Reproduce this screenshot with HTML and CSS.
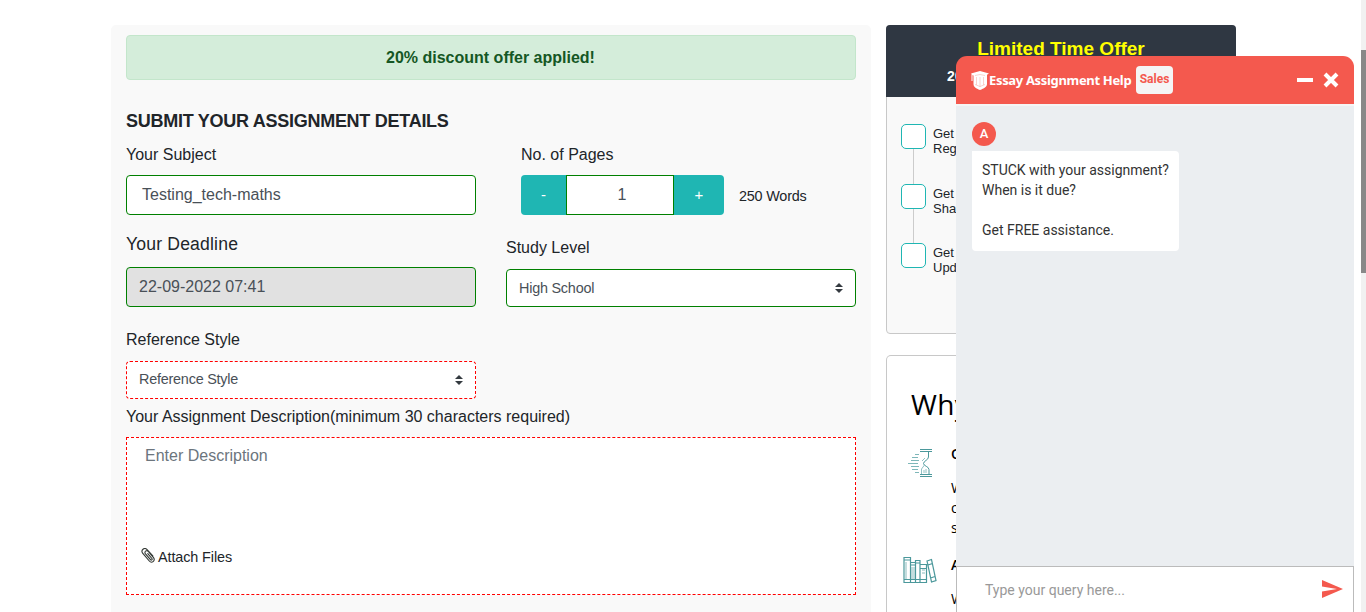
FILE: index.html
```html
<!DOCTYPE html>
<html lang="en">
<head>
<meta charset="utf-8">
<title>Essay Assignment Help</title>
<link rel="stylesheet" href="styles.css">
</head>
<body>
<main class="page">
  <section class="order">
    <div class="alert">20% discount offer applied!</div>
    <h1 class="title">SUBMIT YOUR ASSIGNMENT DETAILS</h1>
    <div class="row">
      <div class="col">
        <div class="label">Your Subject</div>
        <div class="field subject">Testing_tech-maths</div>
      </div>
      <div class="col pages">
        <div class="label">No. of Pages</div>
        <div class="counter">
          <span class="step minus">-</span><span class="count">1</span><span class="step plus">+</span>
          <span class="words">250 Words</span>
        </div>
      </div>
    </div>
    <div class="row second">
      <div class="col">
        <div class="label large">Your Deadline</div>
        <div class="field deadline">22-09-2022 07:41</div>
      </div>
      <div class="col level">
        <div class="label">Study Level</div>
        <div class="select">High School<svg class="caret" viewBox="0 0 8 10"><path d="M4 0 8 4H0zM4 10 0 6H8z" fill="#343a40"/></svg></div>
      </div>
    </div>
    <div class="label ref">Reference Style</div>
    <div class="select missing">Reference Style<svg class="caret" viewBox="0 0 8 10"><path d="M4 0 8 4H0zM4 10 0 6H8z" fill="#343a40"/></svg></div>
    <div class="label desc">Your Assignment Description(minimum 30 characters required)</div>
    <div class="area">
      <div class="hint">Enter Description</div>
      <div class="attach"><svg class="clip" viewBox="0 0 14 16"><path d="M11.800 8 6.300 1.800C5 .4 3.200.3 2 1.200S.5 3.800 1.600 5.100l6.700 7.900c1 1.200 2.600 1.500 3.800.6 1.300-1 1.500-2.700.4-4L7.300 3.500c-.8-.9-1.900-1-2.700-.4s-.9 1.700-.1 2.700l5 5.900c.4.500 1 .5 1.400.2s.4-.9 0-1.400L6.800 5.700" fill="none" stroke="#343a36" stroke-width="1.150" stroke-linecap="round"/></svg>Attach Files</div>
    </div>
  </section>
  <aside class="side">
    <div class="offer">
      <div class="offer-head"><div class="offer-title">Limited Time Offer</div><div class="offer-sub">20</div></div>
      <div class="steps">
        <div class="item"><span class="box"></span><span class="item-text">Get<br>Reg</span></div>
        <div class="item"><span class="box"></span><span class="item-text">Get<br>Sha</span></div>
        <div class="item"><span class="box"></span><span class="item-text">Get<br>Upd</span></div>
      </div>
    </div>
    <div class="why">
      <h2 class="why-title">Why</h2>
      <div class="reason">
        <svg class="glass" viewBox="0 0 26 30" fill="none" stroke="#4b989b"><path d="M12 1.500h12M12 3.500h12M12 26.500h12M12 28.500h12" stroke-width="1"/><path d="M20.500 4v5c0 3-5 4-5 6.500s5.500 3 5.500 6V26" stroke-width="1"/><path d="M13.500 26v-5l3-4" stroke="#91c2c4"/><path d="M7 6.500h4M4 9.500h6M3 12.500h8M0 15.500h10M3 18.500h8M4 21.500h6M7 24.500h4" stroke="#7eb7b9"/><path d="M16 25v-3M18 25v-4M14 13l3-3" stroke="#91c2c4"/></svg>
        <div class="reason-copy"><div class="reason-head">O</div><div>W</div><div>o</div><div>s</div></div>
      </div>
      <div class="reason second-reason">
        <svg class="books" viewBox="0 0 34 28" fill="none" stroke="#4b989b"><path d="M1 1.500h6.500v25H1zM1 4h6.500M7.500 6.500h5v20h-5zM7.500 9h5M12.500 4.500h4.500v22h-4.500zM12.500 7H17M17 8.500h6.500v18H17zM17 12.500h6.500M17 23.500h6.500M1 23.500h22M24 5l4.500-1.500 4.500 21-4.500 1.500zM25 9l4.500-1.500M27.500 22l4.500-1.500" stroke-width="1.200"/><path d="M9 11v12M11 11v12M3 6v17M19 14h3M19 17h3" stroke="#8bbcbe"/></svg>
        <div class="reason-copy"><div class="reason-head">A</div><div>W</div></div>
      </div>
    </div>
  </aside>
</main>
<div class="scroll"><div class="thumb"></div></div>
<section class="chat">
  <header class="chat-head">
    <svg class="crest" viewBox="0 0 18 19"><path d="M0 2.500 9 0l9 2.500-2 1.300v9.200c0 3-3 4.500-7 6-4-1.500-6.500-3-6.500-6V4.500L1.500 4v6h-1V3z" fill="#fff"/><path d="M4 4.500 9 3.500l5 1M5.500 6v8M9 6v10M12.500 6v8M4 13.500l5 2 5-2" fill="none" stroke="#f8b5ae" stroke-width=".6"/></svg>
    <span class="brand">Essay Assignment Help</span>
    <span class="sales">Sales</span>
    <span class="min"></span>
    <svg class="close" viewBox="0 0 16 16"><path d="M2 2 14 14M14 2 2 14" stroke="#fff" stroke-width="4"/></svg>
  </header>
  <div class="chat-body">
    <div class="avatar">A</div>
    <div class="bubble">STUCK with your assignment?<br>When is it due?<br><br>Get FREE assistance.</div>
  </div>
  <div class="chat-input"><span>Type your query here...</span><svg class="send" viewBox="0 0 21 18"><path d="M0 0 21 9 0 18V11.500L15 9 0 6.500z" fill="#f4594e"/></svg></div>
</section>
</body>
</html>
```
FILE: styles.css
```css
* { box-sizing: border-box; }
body { margin: 0; height: 612px; overflow: hidden; background: #fff; color: #212529; font: 16px/24px "Liberation Sans", Arial, sans-serif; }
.page { display: flex; gap: 15px; height: 612px; padding: 25px 0 0 111px; overflow: hidden; }
.order { width: 760px; height: 587px; flex: none; padding: 10px 15px 0; background: #f9f9f9; border-radius: 5px 5px 0 0; }
.alert { height: 45px; line-height: 43px; padding-right: 1px; border: 1px solid #c3e6cb; border-radius: 4px; background: #d4edda; color: #155724; text-align: center; font-weight: 700; }
.title { margin: 29px 0 0; font-size: 18px; line-height: 24px; font-weight: 700; letter-spacing: -.27px; white-space: nowrap; }
.row { display: flex; margin-top: 10px; }
.col { width: 350px; flex: none; }
.pages { width: 335px; margin-left: 45px; }
.level { margin-left: 30px; padding-top: 4px; }
.label { height: 24px; line-height: 24px; white-space: nowrap; }
.large { font-size: 17.6px; letter-spacing: .17px; }
.field { height: 40px; margin-top: 8px; padding-left: 15px; line-height: 37px; border: 1px solid green; border-radius: 4px; background: #fff; color: #495057; }
.row.second { margin-top: 17px; }
.second .field { margin-top: 11px; padding-left: 12px; background: #e1e1e1; }
.counter { display: flex; height: 40px; margin-top: 8px; }
.step { width: 45px; background: #1fb6b3; color: #fff; line-height: 39px; text-align: center; font-size: 15px; }
.minus { border-radius: 4px 0 0 4px; }
.plus { width: 50px; border-radius: 0 4px 4px 0; }
.count { width: 108px; border: 1px solid green; background: #fff; color: #495057; text-align: center; line-height: 37px; padding-left: 4px; }
.words { margin-left: 15px; font-size: 14.4px; letter-spacing: -.2px; line-height: 42px; white-space: nowrap; }
.select { display: flex; justify-content: space-between; align-items: center; width: 350px; height: 38px; padding: 0 12px; border: 1px solid green; border-radius: 4px; background: #fff; color: #495057; font-size: 14.4px; letter-spacing: -.22px; }
.level .select { margin-top: 9px; }
.missing { margin-top: 9px; border: 1px dashed red; padding-bottom: 2px; }
.missing .caret { margin-top: 2px; }
.caret { width: 8px; height: 10px; }
.ref { margin-top: 21px; }
.desc { margin-top: 6px; }
.area { height: 158px; margin-top: 8px; padding: 6px 15px; border: 1px dashed red; background: #fff; }
.hint { padding-left: 3px; color: #6c757d; }
.attach { display: flex; align-items: center; gap: 3px; margin-top: 77px; margin-left: -1px; font-size: 14.4px; letter-spacing: -.1px; }
.clip { width: 14px; height: 16px; margin-top: -2px; }
.side { width: 350px; height: 587px; flex: none; overflow: hidden; }
.offer { height: 309px; border: 1px solid #c8c8c8; border-radius: 4px; background: #f9f9f9; }
.offer-head { height: 72px; margin: -1px -1px 0; padding-top: 12px; border-radius: 4px 4px 0 0; background: #2f3742; text-align: center; }
.offer-title { color: #ff0; font-size: 19px; font-weight: 700; }
.offer-sub { padding-left: 61px; margin-top: 3px; color: #fff; font-size: 14px; font-weight: 700; text-align: left; }
.steps { padding: 27px 0 0 14px; background: linear-gradient(#ccc, #ccc) 26px 45px / 1px 110px no-repeat; }
.item { display: flex; gap: 7px; height: 59.500px; }
.box { width: 25px; height: 25px; border: 1px solid #1fb6b3; border-radius: 5px; background: #fff; }
.item-text { padding-top: 2px; font-size: 13px; line-height: 15.200px; }
.why { height: 257px; margin-top: 21px; padding: 28px 16px 0; border: 1px solid #c8c8c8; border-bottom: 0; border-radius: 5px 5px 0 0; color: #000; }
.why-title { margin: 0; padding-left: 8px; font: 28px/40px "Open Sans", sans-serif; letter-spacing: .4px; }
.reason { display: flex; gap: 17px; height: 111px; padding-top: 19px; padding-left: 5px; }
.glass { width: 26px; height: 30px; margin-top: 5px; }
.reason-copy { font: 14px/20px "Open Sans", sans-serif; }
.reason-head { height: 35px; line-height: 22px; font-weight: 600; }
.second-reason { height: 80px; gap: 14px; padding-left: 0; }
.books { width: 34px; height: 28px; margin-top: 2px; }
.scroll { position: absolute; top: 0; right: 0; width: 5px; height: 612px; padding-top: 50px; background: #f1f1f1; }
.thumb { height: 223px; background: #888; }
.chat { position: absolute; left: 956px; top: 56px; width: 398px; height: 556px; overflow: hidden; border-radius: 11px 11px 0 0; display: flex; flex-direction: column; font-family: Roboto, sans-serif; }
.chat-head { display: flex; align-items: center; height: 48px; flex: none; padding: 0 15px; background: #f4594e; color: #fff; }
.crest { width: 18px; height: 19px; }
.brand { width: 142px; font: 700 13px/20px "Noto Sans", sans-serif; letter-spacing: -.33px; white-space: nowrap; }
.sales { width: 37px; height: 28px; margin-left: 5px; border-radius: 4px; background: #f5f5f5; color: #f4594e; text-align: center; font-size: 12px; font-weight: 700; line-height: 26px; }
.min { width: 16px; height: 4px; margin-left: auto; background: #fff; }
.close { width: 16px; height: 16px; margin-left: 10px; }
.chat-body { flex: 1; padding: 18px 16px; border-top: 2px solid #f5f5f5; background: #ebeef1; }
.avatar { width: 24px; height: 24px; margin-top: -2px; border-radius: 50%; background: #f4594e; color: #fff; text-align: center; font-size: 13px; font-weight: 500; line-height: 23px; }
.bubble { width: 207px; height: 100px; margin-top: 5px; padding: 9px 10px; border-radius: 0 4px 4px; background: #fff; color: #333; font-size: 14px; line-height: 20px; white-space: nowrap; }
.chat-input { display: flex; align-items: center; justify-content: space-between; height: 46px; flex: none; padding: 0 10px 0 28px; border: 1px solid #bbb; border-bottom: 0; background: #fff; color: #999; font-size: 14px; }
.send { width: 21px; height: 18px; margin-top: -2px; }
```
